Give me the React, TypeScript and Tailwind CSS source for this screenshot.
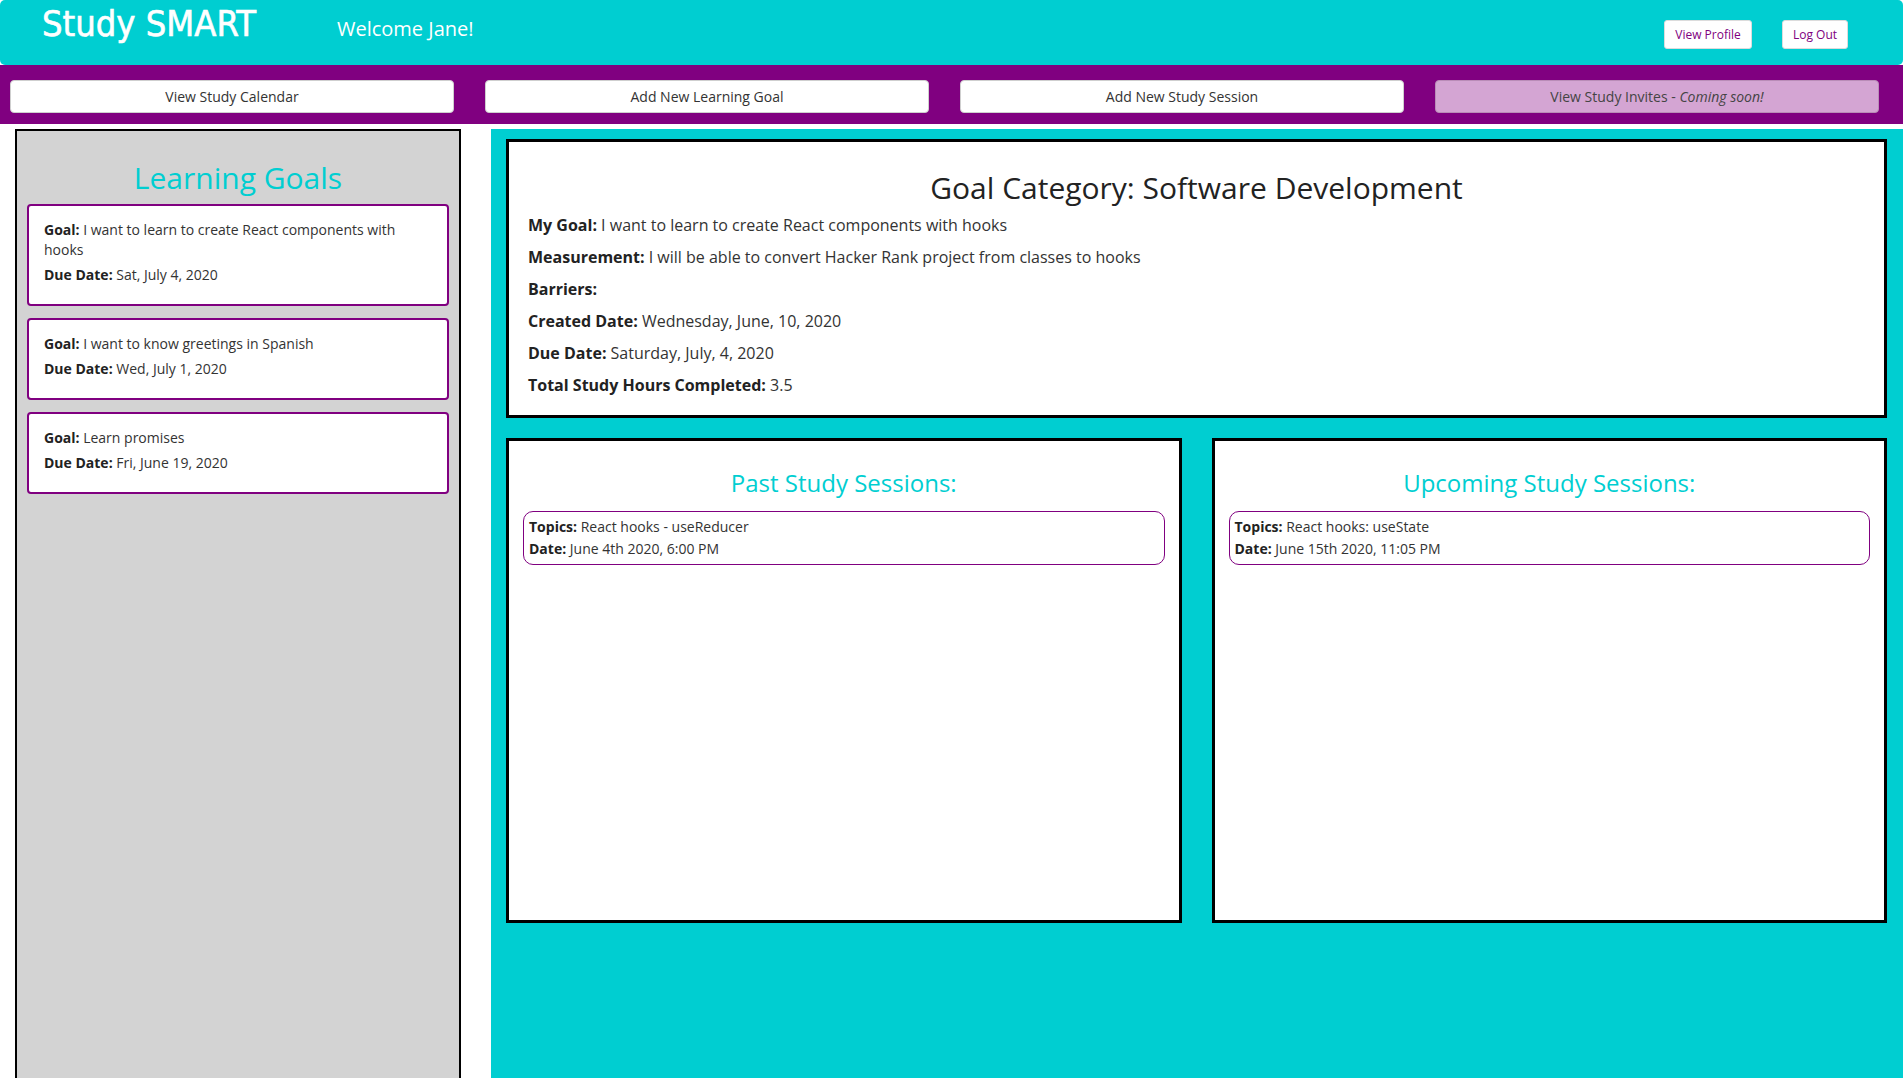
export default function App() {
  const goals = [
    { goal: "I want to learn to create React components with hooks", due: "Sat, July 4, 2020" },
    { goal: "I want to know greetings in Spanish", due: "Wed, July 1, 2020" },
    { goal: "Learn promises", due: "Fri, June 19, 2020" },
  ];
  const navBtn =
    "h-[33px] w-[444px] rounded-[4px] border border-[#cfcfcf] bg-white text-[14px] text-[#333]";
  return (
    <div className="w-[1903px] h-[1078px] overflow-hidden bg-white font-['Open_Sans',sans-serif] text-[#333]">
      <header className="flex h-[65px] items-start rounded-[5px] bg-[#00ced1]">
        <div className="ml-[42px] mt-[5px] w-[295px] font-['DejaVu_Sans_Condensed','DejaVu_Sans',sans-serif] text-[36px] font-normal leading-[38px] text-white [-webkit-text-stroke:0.6px_white]">
          Study SMART
        </div>
        <div className="mt-[15px] text-[20px] leading-[28px] text-white">Welcome Jane!</div>
        <div className="ml-auto mr-[55px] mt-[20px] flex gap-[30px]">
          <button className="h-[29px] w-[88px] rounded-[3px] border border-[#dcdcdc] bg-white text-[12px] text-[#800080]">
            View Profile
          </button>
          <button className="h-[29px] w-[66px] rounded-[3px] border border-[#dcdcdc] bg-white text-[12px] text-[#800080]">
            Log Out
          </button>
        </div>
      </header>

      <nav className="flex h-[59px] gap-[31px] bg-[#800080] pl-[10px] pt-[15px]">
        <button className={navBtn}>View Study Calendar</button>
        <button className={navBtn}>Add New Learning Goal</button>
        <button className={navBtn}>Add New Study Session</button>
        <button className="h-[33px] w-[444px] rounded-[4px] border border-[#b98cb7] bg-[#d4a5d3] text-[14px] text-[#444]">
          View Study Invites - <i>Coming soon!</i>
        </button>
      </nav>

      <div className="mt-[5px] flex h-[949px]">
        <aside className="ml-[15px] w-[446px] border-x-2 border-t-2 border-black bg-[#d3d3d3] px-[10px]">
          <h2 className="mb-[6px] mt-[27px] text-center text-[30px] leading-[40px] text-[#00ced1]">
            Learning Goals
          </h2>
          {goals.map((g) => (
            <div
              key={g.goal}
              className="mb-[12px] rounded-[4px] border-2 border-[#800080] bg-white px-[15px] pb-[14px] pt-[14px] text-[14px] leading-[20px] text-[#333]"
            >
              <p className="mb-[5px]">
                <b className="font-bold text-[#222]">Goal:</b> {g.goal}
              </p>
              <p className="mb-[5px]">
                <b className="font-bold text-[#222]">Due Date:</b> {g.due}
              </p>
            </div>
          ))}
        </aside>

        <main className="ml-[30px] flex-1 bg-[#00ced1] pl-[15px] pr-[16px] pt-[10px]">
          <section className="h-[279px] border-[3px] border-black bg-white px-[19px] pt-[26px] text-[16px] leading-[32px]">
            <h1 className="text-center text-[30px] leading-[40px] text-[#222]">
              Goal Category: Software Development
            </h1>
            <div className="mt-[1px]">
              <p>
                <b className="font-bold text-[#222]">My Goal:</b> I want to learn to create React components with hooks
              </p>
              <p>
                <b className="font-bold text-[#222]">Measurement:</b> I will be able to convert Hacker Rank project from classes to hooks
              </p>
              <p>
                <b className="font-bold text-[#222]">Barriers:</b>
              </p>
              <p>
                <b className="font-bold text-[#222]">Created Date:</b> Wednesday, June, 10, 2020
              </p>
              <p>
                <b className="font-bold text-[#222]">Due Date:</b> Saturday, July, 4, 2020
              </p>
              <p>
                <b className="font-bold text-[#222]">Total Study Hours Completed:</b> 3.5
              </p>
            </div>
          </section>

          <div className="mt-[20px] flex gap-[30px]">
            <section className="h-[485px] flex-1 border-[3px] border-black bg-white px-[14px] pt-[26px]">
              <h2 className="text-center text-[24px] leading-[32px] text-[#00ced1]">Past Study Sessions:</h2>
              <div className="mt-[12px] rounded-[10px] border border-[#800080] px-[5px] py-[4px] text-[14px] leading-[22px]">
                <p>
                  <b className="font-bold text-[#222]">Topics:</b> React hooks - useReducer
                </p>
                <p>
                  <b className="font-bold text-[#222]">Date:</b> June 4th 2020, 6:00 PM
                </p>
              </div>
            </section>
            <section className="h-[485px] flex-1 border-[3px] border-black bg-white px-[14px] pt-[26px]">
              <h2 className="text-center text-[24px] leading-[32px] text-[#00ced1]">Upcoming Study Sessions:</h2>
              <div className="mt-[12px] rounded-[10px] border border-[#800080] px-[5px] py-[4px] text-[14px] leading-[22px]">
                <p>
                  <b className="font-bold text-[#222]">Topics:</b> React hooks: useState
                </p>
                <p>
                  <b className="font-bold text-[#222]">Date:</b> June 15th 2020, 11:05 PM
                </p>
              </div>
            </section>
          </div>
        </main>
      </div>
    </div>
  );
}
